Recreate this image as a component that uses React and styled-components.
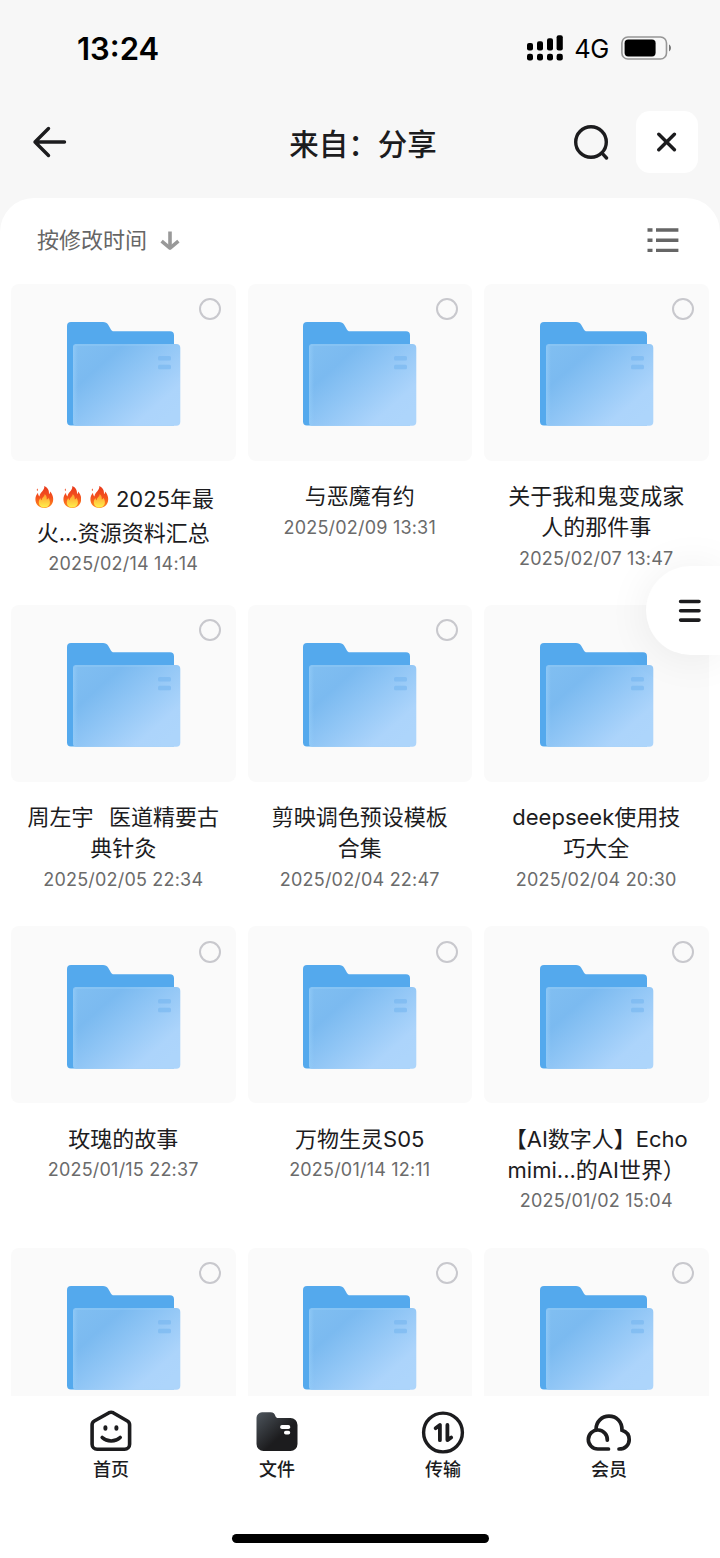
import styled, { createGlobalStyle } from "styled-components";

const GlobalStyle = createGlobalStyle`
  * {
    box-sizing: border-box;
  }
  body {
    margin: 0;
    background-color: white;
    font-family: Inter, "Noto Sans CJK SC", sans-serif;
    color: #1c1c1e;
  }
  svg {
    display: block;
    flex-shrink: 0;
  }
`;

const Screen = styled.div`
  position: relative;
  width: 720px;
  height: 1558px;
  overflow: hidden;
  display: flex;
  flex-direction: column;
  background-color: #f7f7f7;
`;
const StatusBar = styled.div`
  height: 96px;
  padding: 0 48px 0 77px;
  display: flex;
  align-items: center;
  justify-content: space-between;
  color: black;
`;
const Time = styled.span`
  font-size: 31px;
  font-weight: 600;
`;
const StatusIcons = styled.div`
  display: flex;
  align-items: center;
`;
const Network = styled.span`
  margin: 1px 12px 0 11px;
  font-size: 25.5px;
  letter-spacing: -0.4px;
`;
const Header = styled.header`
  height: 102px;
  padding: 0 22px 10px 32px;
  display: grid;
  grid-template-columns: 120px 1fr 124px;
  align-items: center;
`;
const Title = styled.h1`
  margin: 3px 0 0;
  text-align: center;
  font-size: 29.5px;
  font-weight: 500;
  line-height: 40px;
`;
const Actions = styled.div`
  display: flex;
  align-items: center;
  justify-content: space-between;
`;
const CloseButton = styled.button`
  width: 62px;
  height: 62px;
  padding: 0;
  border: none;
  border-radius: 14px;
  background-color: white;
  display: flex;
  align-items: center;
  justify-content: center;
`;
const Panel = styled.main`
  flex: 1;
  min-height: 0;
  display: flex;
  flex-direction: column;
  background-color: white;
  border-radius: 34px 34px 0 0;
`;
const SortBar = styled.div`
  height: 85.5px;
  flex-shrink: 0;
  padding: 0 41px 0 37px;
  display: flex;
  align-items: center;
  justify-content: space-between;
`;
const SortLabel = styled.div`
  display: flex;
  align-items: center;
  gap: 13px;
  color: #666;
`;
const SortText = styled.span`
  padding-bottom: 5px;
  font-size: 22px;
`;
const Grid = styled.div`
  flex: 1;
  min-height: 0;
  overflow: hidden;
  padding: 0 11px;
  display: grid;
  grid-template-columns: repeat(3, 224.5px);
  grid-auto-rows: 321.4px;
  column-gap: 12px;
`;
const Thumb = styled.div`
  position: relative;
  height: 177px;
  padding: 38.5px 0 0 0.6px;
  display: flex;
  justify-content: center;
  border-radius: 8px;
  background-color: #fafafa;
`;
const Check = styled.span`
  position: absolute;
  top: 14.5px;
  right: 14.5px;
  width: 22px;
  height: 22px;
  border: 2px solid #c8c8cd;
  border-radius: 50%;
`;
const Caption = styled.div`
  padding-top: 18px;
  display: flex;
  flex-direction: column;
  align-items: center;
`;
const NameLine = styled.div`
  height: ${({ $tall }) => ($tall ? 36.5 : 31)}px;
  display: flex;
  align-items: center;
  gap: 7px;
  font-size: 22px;
  word-spacing: 1.5px;
  white-space: pre;
`;
const Flames = styled.span`
  padding-left: 3px;
  display: flex;
  gap: 9px;
`;
const DateLine = styled.div`
  height: 31px;
  margin-top: 2px;
  line-height: 32px;
  font-size: 18px;
  letter-spacing: 0.2px;
  color: #6b6b6b;
  white-space: nowrap;
`;
const FloatButton = styled.button`
  position: absolute;
  top: 566px;
  right: 0;
  width: 74px;
  height: 89px;
  padding: 0 0 0 14px;
  border: none;
  border-radius: 45px 0 0 45px;
  background-color: white;
  box-shadow: 0 2px 44px rgba(0, 0, 0, 0.07);
  display: flex;
  align-items: center;
  justify-content: center;
`;
const TabBar = styled.nav`
  height: 162px;
  padding: 14px 28px 0;
  display: grid;
  grid-template-columns: repeat(4, 1fr);
  grid-template-rows: 120px 9px;
  background-color: white;
`;
const Tab = styled.div`
  display: flex;
  flex-direction: column;
  align-items: center;
  gap: 2px;
  font-size: 18px;
  font-weight: 500;
  line-height: 27px;
`;
const HomeIndicator = styled.div`
  grid-column: 1 / -1;
  margin-top: 4px;
  justify-self: center;
  width: 257px;
  height: 9px;
  border-radius: 5px;
  background-color: black;
`;

const SignalIcon = () => (
  <svg width="36" height="26" viewBox="0 0 36 26">
    <rect x="0" y="8" width="6" height="7.6" rx="2" />
    <rect x="10" y="6.2" width="6" height="9.4" rx="2" />
    <rect x="20" y="3.2" width="6" height="12.4" rx="2" />
    <rect x="29.6" y="0.2" width="6.2" height="15.4" rx="2" />
    <rect x="0" y="18.8" width="6" height="6.6" rx="2.2" />
    <rect x="10" y="18.8" width="6" height="6.6" rx="2.2" />
    <rect x="20" y="18.8" width="6" height="6.6" rx="2.2" />
    <rect x="29.6" y="18.8" width="6.2" height="6.6" rx="2.2" />
  </svg>
);

const BatteryIcon = () => (
  <svg width="51" height="24" viewBox="0 0 51 24">
    <rect x="0.9" y="1" width="44.6" height="22" rx="6" fill="none" stroke="#969696" strokeWidth="1.6" />
    <rect x="3.6" y="3.6" width="31" height="16.8" rx="3.6" />
    <path d="M48 8.6c2.6 1.2 2.6 5.6 0 6.8z" fill="#777" />
  </svg>
);

const BackIcon = () => (
  <svg width="36" height="32" viewBox="0 0 36 32" fill="none" stroke="#1c1c1e" strokeWidth="3.4" strokeLinecap="round" strokeLinejoin="round">
    <path d="M32.5 16H3M16.5 2.5L3 16l13.5 13.5" />
  </svg>
);

const SearchIcon = () => (
  <svg width="36" height="36" viewBox="0 0 36 36" fill="none" stroke="#1c1c1e" strokeWidth="3.4" strokeLinecap="round">
    <circle cx="17" cy="18" r="15.3" />
    <path d="M28.5 29.7l4 4.300" />
  </svg>
);

const CloseIcon = () => (
  <svg width="20" height="20" viewBox="0 0 20 20" fill="none" stroke="#1c1c1e" strokeWidth="3.4" strokeLinecap="round">
    <path d="M1.8 2.2l15.6 15.6M17.4 2.2L1.8 17.8" />
  </svg>
);

const SortIcon = () => (
  <svg width="20" height="20" viewBox="0 0 20 20" fill="none" stroke="#999" strokeWidth="3.6">
    <path d="M10 0.5v17" />
    <path d="M1.6 10.2L10 17.2l8.4-7" strokeLinejoin="round" />
  </svg>
);

const ListIcon = () => (
  <svg width="32" height="25" viewBox="0 0 32 25" fill="#666">
    <path d="M0.5 0.3h5v3.4h-5zM9 0.3h22.4v3.4H9zM0.5 10.5h5v3.4h-5zM9 10.5h22.4v3.4H9zM0.5 20.7h5v3.4h-5zM9 20.7h22.4v3.4H9z" />
  </svg>
);

const MenuIcon = () => (
  <svg width="24" height="24" viewBox="0 0 24 24" stroke="#1c1c1e" strokeWidth="3.6" strokeLinecap="round">
    <path d="M2.6 2.5h18.400M2.6 11.8h18.400M2.6 21.1h18.400" />
  </svg>
);

const FolderIcon = () => (
  <svg width="114" height="104" viewBox="0 0 114 104">
    <defs>
      <linearGradient id="front" gradientUnits="userSpaceOnUse" x1="15" y1="22" x2="90" y2="106">
        <stop offset="0" stopColor="#80bef1" />
        <stop offset="0.25" stopColor="#7bbaf0" />
        <stop offset="0.5" stopColor="#8fc5f5" />
        <stop offset="0.85" stopColor="#acd4fb" />
        <stop offset="1" stopColor="#add5fb" />
      </linearGradient>
      <linearGradient id="edge" x1="0" y1="0" x2="1" y2="0">
        <stop offset="0" stopColor="#94ccf8" stopOpacity="0.7" />
        <stop offset="1" stopColor="#94ccf8" stopOpacity="0" />
      </linearGradient>
    </defs>
    <path
      d="M4 0h32c2.5 0 4 .8 5.2 2.8l2.7 4.7c.7 1.2 1.4 1.8 3 1.8H103a4 4 0 0 1 4 4V103.5H4a4 4 0 0 1-4-4V4a4 4 0 0 1 4-4z"
      fill="#54a9ed"
    />
    <rect x="6" y="22" width="107.3" height="81.7" rx="4" fill="url(#front)" />
    <rect x="6" y="22" width="5" height="81.7" rx="3" fill="url(#edge)" />
    <rect x="8" y="22" width="98" height="2" rx="1" fill="#94ccf8" opacity="0.4" />
    <rect x="91" y="34" width="13" height="4.5" rx="1.5" fill="#78b7ef" opacity="0.65" />
    <rect x="91" y="42.7" width="13" height="4.5" rx="1.5" fill="#78b7ef" opacity="0.65" />
  </svg>
);

const FlameIcon = () => (
  <svg width="18.5" height="22" viewBox="0 0 18.5 22">
    <defs>
      <linearGradient id="fire" x1="0" y1="0" x2="0" y2="1">
        <stop offset="0" stopColor="#e8391c" />
        <stop offset="0.5" stopColor="#f4511e" />
        <stop offset="1" stopColor="#ff8a1c" />
      </linearGradient>
      <linearGradient id="core" x1="0" y1="0" x2="0" y2="1">
        <stop offset="0" stopColor="#ff9a2e" />
        <stop offset="1" stopColor="#fff04d" />
      </linearGradient>
    </defs>
    <path
      d="M9.3 0c3.8 1.7 5 4.6 4.7 8.2.8-.5 1.1-1.5 1-2.7 2 2 3.2 4.6 3.2 7.5 0 5.3-3.6 9-8.9 9S.4 18.4.4 13.3c0-2.6.9-4.7 2.6-6.5 0 1.7.5 2.9 1.5 3.6C4.600 6.3 9.8 4.8 9.3 0z"
      fill="url(#fire)"
    />
    <path d="M2.3 2.5c.8.8.9 1.7.1 2.6-.8-.6-.8-1.5-.1-2.6z" fill="#f0603a" />
    <path
      d="M9.6 8.3c2.6 1.6 2 3.7 2.2 5.3.8-.2 1.3-.9 1.4-1.8 1.1 1.3 1.7 2.8 1.7 4.4 0 3.2-2.3 5.2-5.5 5.2s-5.600-2-5.600-5c0-1.7.6-3.1 1.7-4.3.1 1.2.5 1.9 1.3 2.2-.1-2.600 2.7-3.5 2.8-6z"
      fill="url(#core)"
    />
  </svg>
);

const HomeIcon = () => (
  <svg width="44" height="44" viewBox="0 0 44 44" fill="none" stroke="#1c1c1e" strokeWidth="3.6" strokeLinecap="round" strokeLinejoin="round">
    <path d="M20.1 2.7L5.300 11a4.300 4.300 0 0 0-2.200 3.8V34.3a5 5 0 0 0 5 5h27.5a5 5 0 0 0 5-5V14.800a4.300 4.300 0 0 0-2.2-3.8L24.1 2.700a4.500 4.500 0 0 0-4 0z" />
    <path d="M13.2 27.5c4.8 4.6 13.2 4.6 18 0" />
    <path d="M16.4 17.2v1.5M27.4 17.2v1.5" strokeWidth="4" />
  </svg>
);

const FilesIcon = () => (
  <svg width="44" height="44" viewBox="0 0 44 44">
    <defs>
      <linearGradient id="files" x1="0" y1="0.1" x2="0.55" y2="0.65">
        <stop offset="0" stopColor="#4a5158" />
        <stop offset="1" stopColor="#1c1c1e" />
      </linearGradient>
    </defs>
    <path
      d="M7 2.3h8.5c3 0 4.2 1.5 4.9 3.6.5 1.5 1.3 2 3 2H35.5a7 7 0 0 1 7 7V34a7 7 0 0 1-7 7H8.5a7 7 0 0 1-7-7V7.8a5.5 5.5 0 0 1 5.5-5.5z"
      fill="url(#files)"
    />
    <rect x="25.2" y="15" width="10" height="4" rx="1.8" fill="white" />
    <rect x="29" y="20.8" width="6.2" height="3.8" rx="1.8" fill="white" />
  </svg>
);

const TransferIcon = () => (
  <svg width="44" height="44" viewBox="0 0 44 44" fill="none" stroke="#1c1c1e" strokeWidth="3.4" strokeLinecap="round" strokeLinejoin="round">
    <circle cx="22" cy="22.5" r="19.4" />
    <path d="M14.6 18.2l4.300-3.2v15.2M26.4 14.900v15.2l3.800-2.6" strokeWidth="3.8" />
  </svg>
);

const CloudIcon = () => (
  <svg width="46" height="44" viewBox="0 0 46 44" fill="none" stroke="#1c1c1e" strokeWidth="3.7" strokeLinecap="round">
    <path d="M22.5 39H12a9.5 9.5 0 1 1 9.3-8.800" />
    <path d="M10 19.5C10 11.5 16 6.2 23 6.2c7.5 0 13.2 5.6 13 14 4.5 1.4 7.2 5 7.2 9.3 0 5.5-4.2 9.5-10.2 9.5" />
  </svg>
);

const files = [
  { flames: true, lines: ["2025年最", "火...资源资料汇总"], date: "2025/02/14 14:14" },
  { lines: ["与恶魔有约"], date: "2025/02/09 13:31" },
  { lines: ["关于我和鬼变成家", "人的那件事"], date: "2025/02/07 13:47" },
  { lines: ["周左宇  医道精要古", "典针灸"], date: "2025/02/05 22:34" },
  { lines: ["剪映调色预设模板", "合集"], date: "2025/02/04 22:47" },
  { lines: ["deepseek使用技", "巧大全"], date: "2025/02/04 20:30" },
  { lines: ["玫瑰的故事"], date: "2025/01/15 22:37" },
  { lines: ["万物生灵S05"], date: "2025/01/14 12:11" },
  { lines: ["【AI数字人】Echo", "mimi...的AI世界）"], date: "2025/01/02 15:04" },
  { lines: [] },
  { lines: [] },
  { lines: [] },
];

const tabs = [
  { label: "首页", Icon: HomeIcon },
  { label: "文件", Icon: FilesIcon },
  { label: "传输", Icon: TransferIcon },
  { label: "会员", Icon: CloudIcon },
];

const FileCard = ({ file }) => {
  return (
    <div>
      <Thumb>
        <FolderIcon />
        <Check />
      </Thumb>
      <Caption>
        {file.lines.map((line, i) => (
          <NameLine key={line} $tall={file.flames && i === 0}>
            {file.flames && i === 0 && (
              <Flames>
                <FlameIcon />
                <FlameIcon />
                <FlameIcon />
              </Flames>
            )}
            {line}
          </NameLine>
        ))}
        {file.date && <DateLine>{file.date}</DateLine>}
      </Caption>
    </div>
  );
};

const App = () => {
  return (
    <>
      <GlobalStyle />
      <Screen>
        <StatusBar>
          <Time>13:24</Time>
          <StatusIcons>
            <SignalIcon />
            <Network>4G</Network>
            <BatteryIcon />
          </StatusIcons>
        </StatusBar>
        <Header>
          <BackIcon />
          <Title>来自：分享</Title>
          <Actions>
            <SearchIcon />
            <CloseButton>
              <CloseIcon />
            </CloseButton>
          </Actions>
        </Header>
        <Panel>
          <SortBar>
            <SortLabel>
              <SortText>按修改时间</SortText>
              <SortIcon />
            </SortLabel>
            <ListIcon />
          </SortBar>
          <Grid>
            {files.map((file, i) => (
              <FileCard key={i} file={file} />
            ))}
          </Grid>
        </Panel>
        <TabBar>
          {tabs.map(({ label, Icon }) => (
            <Tab key={label}>
              <Icon />
              {label}
            </Tab>
          ))}
          <HomeIndicator />
        </TabBar>
        <FloatButton>
          <MenuIcon />
        </FloatButton>
      </Screen>
    </>
  );
};

export default App;
